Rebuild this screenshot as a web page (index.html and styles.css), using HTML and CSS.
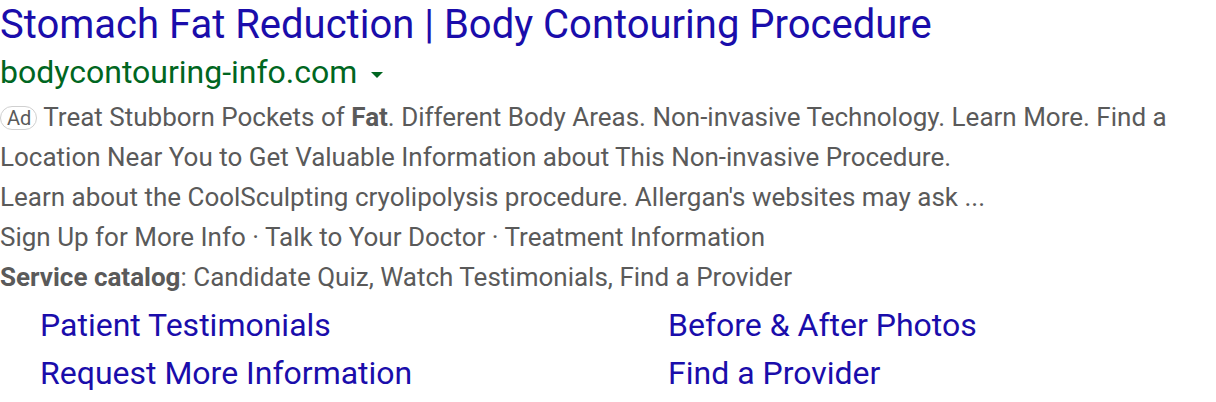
FILE: index.html
```html
<!DOCTYPE html>
<html>
<head>
<meta charset="utf-8">
<link rel="stylesheet" href="styles.css">
</head>
<body>
<div class="ad">
  <h3 class="title">Stomach Fat Reduction | Body Contouring Procedure</h3>
  <div class="url">bodycontouring-info.com <span class="caret"></span></div>
  <div class="desc"><span class="badge">Ad</span> Treat Stubborn Pockets of <b>Fat</b>. Different Body Areas. Non-invasive Technology. Learn More. Find a Location Near You to Get Valuable Information about This Non-invasive Procedure.</div>
  <div class="desc">Learn about the CoolSculpting cryolipolysis procedure. Allergan's websites may ask ...</div>
  <div class="desc">Sign Up for More Info · Talk to Your Doctor · Treatment Information</div>
  <div class="desc"><b>Service catalog</b>: Candidate Quiz, Watch Testimonials, Find a Provider</div>
  <div class="sitelinks">
    <a>Patient Testimonials</a>
    <a>Before &amp; After Photos</a>
    <a>Request More Information</a>
    <a>Find a Provider</a>
  </div>
</div>
</body>
</html>
```
FILE: styles.css
```css
body { margin: 0; background: #fff; font-family: Roboto, "Noto Sans", sans-serif; }
.ad { width: 1180px; }
.title { margin: 0; padding-top: 2px; font-weight: 400; font-size: 40px; line-height: 46px; color: #1a0dab; }
.url { font-size: 32px; line-height: 49px; color: #006621; display: flex; align-items: center; }
.caret { display: inline-block; width: 0; height: 0; border-left: 6.5px solid transparent; border-right: 6.5px solid transparent; border-top: 6px solid #006621; margin-left: 14px; margin-top: 4px; }
.desc { font-size: 26px; line-height: 40px; color: #5a5a5a; }
.desc b { font-weight: 700; }
.badge { display: inline-block; font-size: 20px; line-height: 22px; border: 1px solid #d0d0d0; border-radius: 12px; padding: 0 5px 0 6px; color: #5a5a5a; vertical-align: 1px; }
.sitelinks { display: grid; grid-template-columns: 628px 1fr; padding-left: 40px; padding-top: 4px; font-size: 32px; line-height: 48px; color: #1a0dab; }
```
